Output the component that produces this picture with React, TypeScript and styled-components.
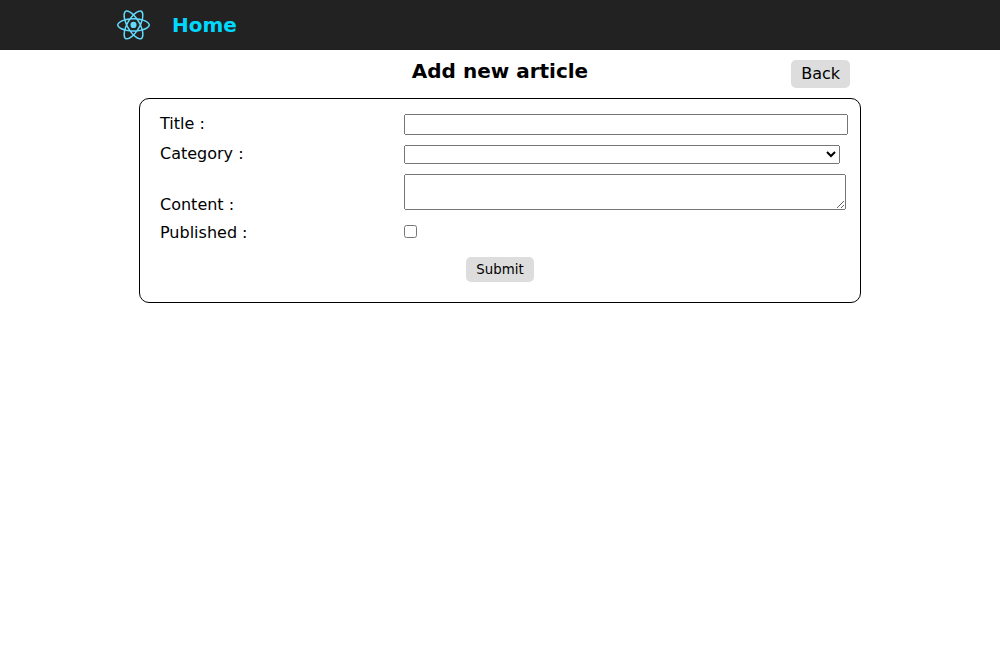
import React from "react";
import styled, { createGlobalStyle } from "styled-components";

const GlobalStyle = createGlobalStyle`
  body {
    margin: 0;
    background: #fff;
    color: #000;
    font-family: "DejaVu Sans", sans-serif;
    font-size: 16px;
  }
`;

const Header = styled.header`
  background: #222;
  height: 50px;
`;

const Nav = styled.nav`
  display: flex;
  align-items: center;
  gap: 10px;
  box-sizing: border-box;
  height: 100%;
  width: 80%;
  margin: 0 auto;
  padding: 0 5px;
`;

const Logo = styled.svg`
  display: block;
  width: 57px;
  height: 40px;
`;

const HomeLink = styled.a`
  color: #00d8ff;
  font-size: 20px;
  font-weight: bold;
  line-height: 23px;
  text-decoration: none;
`;

const Main = styled.main`
  width: 72%;
  margin: 0 auto;
`;

const TitleBar = styled.div`
  display: grid;
  grid-template-columns: 1fr auto 1fr;
  align-items: start;
  padding: 10px;
`;

const Heading = styled.h1`
  grid-column: 2;
  margin: 0;
  font-size: 20px;
  line-height: 23px;
`;

const BackLink = styled.a`
  justify-self: end;
  padding: 4px 10px;
  border-radius: 5px;
  background: #ddd;
  color: #000;
  line-height: 20px;
  text-decoration: none;
`;

const Form = styled.form`
  margin: 0 -1px;
  padding: 15px 20px 20px;
  border: 1px solid #000;
  border-radius: 10px;
`;

const Fields = styled.div`
  display: grid;
  gap: 9px;
`;

const Row = styled.div<{ $multiline?: boolean }>`
  display: grid;
  grid-template-columns: 244px 1fr;
  align-items: ${({ $multiline }) => ($multiline ? "end" : "baseline")};
  min-height: 21px;
`;

const Label = styled.label`
  line-height: 19px;
`;

const Input = styled.input`
  box-sizing: border-box;
  width: calc(100% + 8px);
  height: 21px;
`;

const Select = styled.select`
  width: 100%;
  height: 19px;
`;

const TextArea = styled.textarea`
  box-sizing: border-box;
  width: calc(100% + 6px);
  height: 36px;
  margin-bottom: 4px;
`;

const Checkbox = styled.input`
  justify-self: start;
  margin: 0;
`;

const Actions = styled.div`
  display: flex;
  justify-content: center;
  margin-top: 13px;
`;

const SubmitButton = styled.button`
  padding: 5px 10px;
  border: 0;
  border-radius: 5px;
  background: #ddd;
  color: #000;
  font-family: inherit;
  line-height: 15px;
`;

function ReactLogo() {
  return (
    <Logo viewBox="0 0 841.9 595.3" aria-hidden="true">
      <g fill="#61DAFB">
        <path d="M666.3 296.5c0-32.5-40.7-63.3-103.1-82.4 14.4-63.6 8-114.2-20.2-130.4-6.5-3.8-14.1-5.6-22.4-5.6v22.3c4.6 0 8.3.9 11.4 2.6 13.6 7.8 19.5 37.5 14.9 75.7-1.1 9.4-2.9 19.3-5.1 29.4-19.6-4.8-41-8.5-63.5-10.9-13.5-18.5-27.5-35.3-41.6-50 32.6-30.3 63.2-46.9 84-46.9V78c-27.5 0-63.5 19.6-99.9 53.6-36.4-33.8-72.4-53.2-99.9-53.2v22.3c20.7 0 51.4 16.5 84 46.6-14 14.7-28 31.4-41.3 49.9-22.6 2.4-44 6.1-63.6 11-2.3-10-4-19.7-5.2-29-4.7-38.2 1.1-67.9 14.6-75.8 3-1.8 6.9-2.6 11.5-2.6V78.500c-8.400 0-16 1.800-22.600 5.600-28.100 16.200-34.400 66.700-19.900 130.100-62.200 19.200-102.700 49.900-102.700 82.300 0 32.500 40.700 63.300 103.100 82.400-14.400 63.600-8 114.200 20.200 130.400 6.500 3.800 14.100 5.600 22.500 5.600 27.500 0 63.500-19.600 99.900-53.600 36.400 33.800 72.400 53.200 99.900 53.200 8.400 0 16-1.800 22.600-5.600 28.100-16.200 34.400-66.700 19.900-130.100 62-19.100 102.500-49.900 102.500-82.300zm-130.200-66.700c-3.700 12.900-8.300 26.200-13.500 39.500-4.100-8-8.400-16-13.100-24-4.600-8-9.500-15.800-14.400-23.400 14.200 2.100 27.900 4.700 41 7.900zm-45.800 106.500c-7.800 13.500-15.800 26.300-24.100 38.200-14.900 1.300-30 2-45.200 2-15.100 0-30.200-.7-45-1.900-8.300-11.900-16.400-24.600-24.200-38-7.600-13.100-14.500-26.400-20.800-39.800 6.200-13.400 13.200-26.800 20.700-39.900 7.800-13.500 15.800-26.300 24.100-38.200 14.900-1.300 30-2 45.200-2 15.100 0 30.200.7 45 1.900 8.300 11.900 16.400 24.600 24.200 38 7.600 13.100 14.500 26.400 20.800 39.800-6.300 13.400-13.200 26.800-20.700 39.900zm32.300-13c5.400 13.400 10 26.800 13.800 39.800-13.100 3.200-26.900 5.900-41.200 8 4.900-7.700 9.800-15.600 14.400-23.700 4.600-8 8.900-16.100 13-24.100zM421.200 430c-9.300-9.600-18.600-20.300-27.800-32 9 .4 18.200.7 27.500.7 9.400 0 18.700-.2 27.800-.7-9 11.700-18.300 22.400-27.500 32zm-74.400-58.900c-14.200-2.100-27.900-4.700-41-7.900 3.700-12.900 8.300-26.200 13.500-39.500 4.100 8 8.400 16 13.100 24 4.700 8 9.500 15.800 14.400 23.400zM420.700 163c9.300 9.600 18.600 20.300 27.800 32-9-.4-18.200-.7-27.500-.7-9.400 0-18.700.2-27.800.7 9-11.700 18.300-22.400 27.500-32zm-74 58.900c-4.900 7.700-9.800 15.600-14.400 23.700-4.600 8-8.900 16-13 24-5.400-13.400-10-26.800-13.800-39.800 13.100-3.100 26.900-5.800 41.200-7.900zm-90.500 125.200c-35.400-15.100-58.300-34.900-58.300-50.600 0-15.700 22.900-35.600 58.300-50.600 8.600-3.700 18-7 27.700-10.100 5.700 19.600 13.200 40 22.500 60.900-9.200 20.800-16.600 41.100-22.200 60.600-9.900-3.100-19.300-6.500-28-10.200zM310 490c-13.600-7.800-19.500-37.500-14.900-75.700 1.100-9.400 2.900-19.300 5.100-29.400 19.600 4.800 41 8.500 63.500 10.900 13.500 18.500 27.500 35.300 41.600 50-32.600 30.300-63.200 46.900-84 46.900-4.500-.1-8.300-1-11.300-2.700zm237.200-76.200c4.700 38.200-1.100 67.900-14.600 75.800-3 1.800-6.900 2.600-11.500 2.600-20.700 0-51.400-16.500-84-46.600 14-14.700 28-31.400 41.300-49.900 22.600-2.400 44-6.100 63.600-11 2.300 10.100 4.100 19.800 5.200 29.100zm38.500-66.700c-8.600 3.700-18 7-27.700 10.100-5.700-19.600-13.200-40-22.500-60.900 9.200-20.800 16.600-41.100 22.200-60.600 9.900 3.100 19.300 6.500 28.100 10.200 35.400 15.100 58.300 34.900 58.300 50.600-.1 15.700-23 35.600-58.400 50.600z" />
        <circle cx="420.900" cy="296.500" r="45.700" />
      </g>
    </Logo>
  );
}

export default function App() {
  return (
    <>
      <GlobalStyle />
      <Header>
        <Nav>
          <ReactLogo />
          <HomeLink href="#">Home</HomeLink>
        </Nav>
      </Header>
      <Main>
        <TitleBar>
          <Heading>Add new article</Heading>
          <BackLink href="#">Back</BackLink>
        </TitleBar>
        <Form onSubmit={(event) => event.preventDefault()}>
          <Fields>
            <Row>
              <Label htmlFor="title">Title :</Label>
              <Input id="title" type="text" />
            </Row>
            <Row>
              <Label htmlFor="category">Category :</Label>
              <Select id="category" />
            </Row>
            <Row $multiline>
              <Label htmlFor="content">Content :</Label>
              <TextArea id="content" />
            </Row>
            <Row>
              <Label htmlFor="published">Published :</Label>
              <Checkbox id="published" type="checkbox" />
            </Row>
          </Fields>
          <Actions>
            <SubmitButton type="submit">Submit</SubmitButton>
          </Actions>
        </Form>
      </Main>
    </>
  );
}
